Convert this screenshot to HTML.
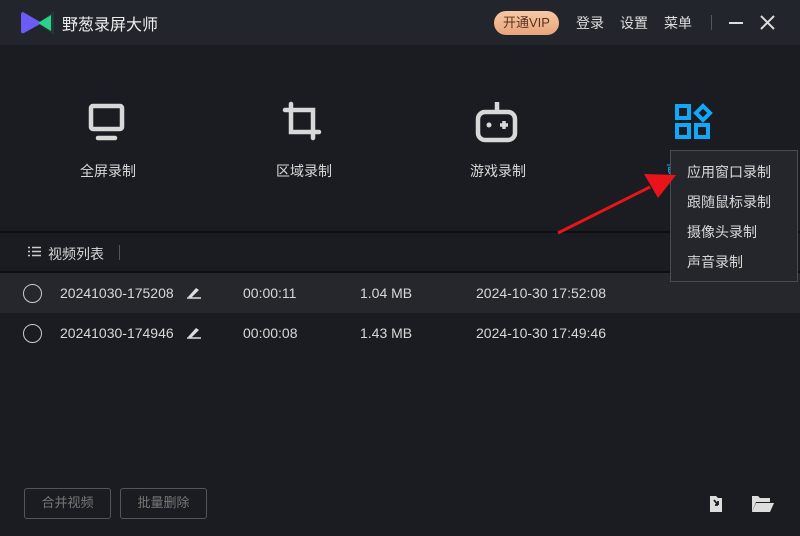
<!DOCTYPE html>
<html><head><meta charset="utf-8"><style>
*{margin:0;padding:0;box-sizing:border-box}
body{width:800px;height:536px;background:#1b1c21;font-family:"Liberation Sans","Noto Sans CJK SC",sans-serif;color:#d8d8d8;position:relative;overflow:hidden}
.a{position:absolute}
.top{left:0;top:0;width:800px;height:45px;background:#23252d}
.t{font-size:14px;white-space:nowrap}
</style></head><body>
<div class="a top"></div>
<svg class="a" style="left:20px;top:10px" width="36" height="26"><path d="M3 2Q1 2 1 5V21Q1 24 4 23L22 13Z" fill="#6a5cf5"/><polygon points="34,1 18,13 34,25" fill="#1f3a35"/><polygon points="31,5 18,13 31,21" fill="#2bd18a"/></svg>
<div class="a" style="left:62px;top:11px;font-size:16px;color:#eee">野葱录屏大师</div>
<div class="a" style="left:494px;top:11px;width:65px;height:24px;border-radius:12px;background:linear-gradient(#f7c9a4,#e8a47a);color:#5a3220;font-size:13px;line-height:24px;text-align:center">开通VIP</div>
<div class="a t" style="left:576px;top:13px;color:#ddd">登录</div>
<div class="a t" style="left:620px;top:13px;color:#ddd">设置</div>
<div class="a t" style="left:664px;top:13px;color:#ddd">菜单</div>
<div class="a" style="left:711px;top:15px;width:1px;height:15px;background:#555"></div>
<div class="a" style="left:729px;top:22px;width:14px;height:2px;background:#ddd"></div>
<svg class="a" style="left:760px;top:15px" width="15" height="15"><path d="M1 1L14 14M14 1L1 14" stroke="#ddd" stroke-width="2"/></svg>

<svg class="a" style="left:88px;top:103px" width="38" height="38" fill="none" stroke="#d8d8d8" stroke-width="4.5"><rect x="3" y="3" width="31" height="23" rx="2"/><path d="M10 35H27" stroke-linecap="round"/></svg>
<div class="a t" style="left:80px;top:161px">全屏录制</div>
<svg class="a" style="left:282px;top:101px" width="40" height="40" fill="none" stroke="#d8d8d8" stroke-width="4.5" stroke-linecap="round"><path d="M9 3V31H37M3 9H31V37"/></svg>
<div class="a t" style="left:276px;top:161px">区域录制</div>
<svg class="a" style="left:475px;top:100px" width="44" height="43" fill="none" stroke="#d8d8d8" stroke-width="4.5"><path d="M22 2V10"/><rect x="3" y="12" width="37" height="28" rx="7"/><circle cx="14" cy="25" r="2.5" fill="#d8d8d8" stroke="none"/><path d="M25 25H33M29 21V29" stroke-width="3.5"/></svg>
<div class="a t" style="left:470px;top:161px">游戏录制</div>
<svg class="a" style="left:674px;top:103px" width="40" height="38" fill="none" stroke="#13a8f5" stroke-width="4"><rect x="3" y="3" width="12" height="12"/><path d="M29 3L36 10L29 17L22 10Z"/><rect x="3" y="22" width="12" height="12"/><rect x="22" y="22" width="12" height="12"/></svg>
<div class="a t" style="left:666px;top:161px;color:#13a8f5">更</div>

<div class="a" style="left:0;top:231px;width:800px;height:2px;background:#0e0f12"></div>
<svg class="a" style="left:28px;top:246px" width="13" height="11" stroke="#ccc" stroke-width="1.4"><path d="M0 1.5H2M4 1.5H13M0 5.5H2M4 5.5H13M0 9.5H2M4 9.5H13"/></svg>
<div class="a" style="left:48px;top:244px;font-size:14px">视频列表</div>
<div class="a" style="left:119px;top:245px;width:1px;height:15px;background:#555"></div>
<div class="a" style="left:0;top:271px;width:800px;height:2px;background:#0e0f12"></div>
<div class="a" style="left:0;top:273px;width:800px;height:40px;background:#25272d"></div>

<div class="a" style="left:23px;top:284px;width:19px;height:19px;border:1.5px solid #ccc;border-radius:50%"></div>
<div class="a t" style="left:60px;top:285px">20241030-175208</div>
<svg class="a" style="left:186px;top:285px" width="16" height="14"><path d="M2 12L10 3L13 5L5 13Z" fill="#ddd"/><path d="M1 13H15" stroke="#ddd" stroke-width="1.5"/></svg>
<div class="a t" style="left:243px;top:285px">00:00:11</div>
<div class="a t" style="left:360px;top:285px">1.04 MB</div>
<div class="a t" style="left:476px;top:285px">2024-10-30 17:52:08</div>

<div class="a" style="left:23px;top:324px;width:19px;height:19px;border:1.5px solid #ccc;border-radius:50%"></div>
<div class="a t" style="left:60px;top:325px">20241030-174946</div>
<svg class="a" style="left:186px;top:325px" width="16" height="14"><path d="M2 12L10 3L13 5L5 13Z" fill="#ddd"/><path d="M1 13H15" stroke="#ddd" stroke-width="1.5"/></svg>
<div class="a t" style="left:243px;top:325px">00:00:08</div>
<div class="a t" style="left:360px;top:325px">1.43 MB</div>
<div class="a t" style="left:476px;top:325px">2024-10-30 17:49:46</div>

<div class="a" style="left:670px;top:150px;width:128px;height:132px;background:#25262b;border:1px solid #4a4b50"></div>
<div class="a t" style="left:687px;top:162px">应用窗口录制</div>
<div class="a t" style="left:687px;top:192px">跟随鼠标录制</div>
<div class="a t" style="left:687px;top:222px">摄像头录制</div>
<div class="a t" style="left:687px;top:252px">声音录制</div>
<svg class="a" style="left:0;top:0" width="800" height="536"><path d="M558 233L650 187" stroke="#e8141a" stroke-width="3"/><polygon points="676,175 644,174 658,198" fill="#e8141a"/></svg>

<div class="a" style="left:24px;top:488px;width:87px;height:31px;border:1.5px solid #555;border-radius:3px;color:#777;font-size:13px;line-height:28px;text-align:center">合并视频</div>
<div class="a" style="left:120px;top:488px;width:87px;height:31px;border:1.5px solid #555;border-radius:3px;color:#777;font-size:13px;line-height:28px;text-align:center">批量删除</div>
<svg class="a" style="left:708px;top:494px" width="22" height="20"><path d="M2 2H8L10 4H14V18H2Z" fill="#ddd"/><path d="M6 6L10 11M10 11V7M10 11H7" stroke="#1b1c21" stroke-width="1.8" fill="none"/></svg>
<svg class="a" style="left:750px;top:494px" width="24" height="20"><path d="M2 2H8L10 4H20V8H6L2 18Z" fill="#ddd"/><path d="M6 9H24L20 18H2Z" fill="#ddd"/></svg>
</body></html>
